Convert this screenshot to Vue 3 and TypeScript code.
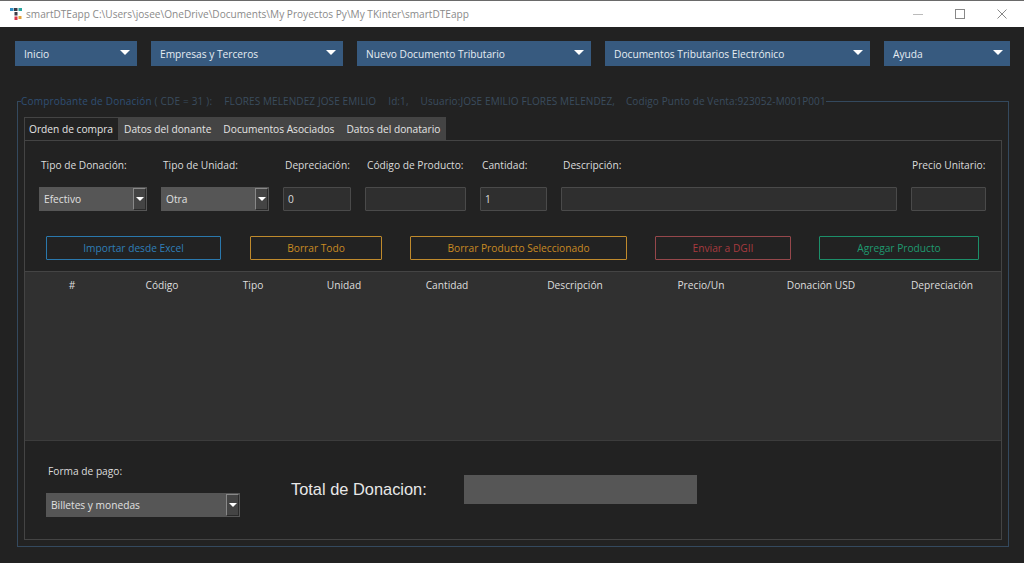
<script setup lang="ts">
const menus = [
  { label: 'Inicio', width: 122 },
  { label: 'Empresas y Terceros', width: 192 },
  { label: 'Nuevo Documento Tributario', width: 234 },
  { label: 'Documentos Tributarios Electrónico', width: 265 },
  { label: 'Ayuda', width: 126 },
]
const tabs = ['Datos del donante', 'Documentos Asociados', 'Datos del donatario']
const buttons = [
  { label: 'Importar desde Excel', cls: 'blue' },
  { label: 'Borrar Todo', cls: 'orange' },
  { label: 'Borrar Producto Seleccionado', cls: 'orange' },
  { label: 'Enviar a DGII', cls: 'red' },
  { label: 'Agregar Producto', cls: 'green' },
]
const columns = ['#', 'Código', 'Tipo', 'Unidad', 'Cantidad', 'Descripción', 'Precio/Un', 'Donación USD', 'Depreciación']
</script>

<template>
  <div class="window">
    <header class="titlebar">
      <svg class="logo" width="14" height="14" viewBox="0 0 14 14">
        <rect x="1" y="1" width="3.5" height="3" fill="#2f8fc4" />
        <rect x="5" y="1" width="3.5" height="3" fill="#3a3a46" />
        <rect x="9.5" y="1" width="3.5" height="3" fill="#2aa6a0" />
        <rect x="5.5" y="5" width="3" height="3.5" fill="#3c3c48" />
        <rect x="5.5" y="9.5" width="3" height="3.5" fill="#d8344a" />
        <rect x="9.5" y="9" width="3" height="3" fill="#e2a23a" />
      </svg>
      <span class="title">smartDTEapp C:\Users\josee\OneDrive\Documents\My Proyectos Py\My TKinter\smartDTEapp</span>
      <div class="controls">
        <svg width="12" height="12" viewBox="0 0 12 12"><path d="M1 6.5h10" stroke="#bbb" fill="none" /></svg>
        <svg width="12" height="12" viewBox="0 0 12 12"><rect x="1.5" y="1.5" width="9" height="9" stroke="#888" fill="none" /></svg>
        <svg width="12" height="12" viewBox="0 0 12 12"><path d="M1.5 1.5l9 9M10.5 1.5l-9 9" stroke="#888" fill="none" /></svg>
      </div>
    </header>

    <main class="content">
      <nav class="menubar">
        <div v-for="m in menus" :key="m.label" class="menu" :style="{ width: m.width + 'px' }">
          <span>{{ m.label }}</span>
          <i class="arrow" />
        </div>
      </nav>

      <fieldset class="group">
        <legend><span class="lead">Comprobante de Donación</span> ( CDE = 31 ):<span class="sp">FLORES MELENDEZ JOSE EMILIO</span><span class="sp">Id:1,</span><span class="sp">Usuario:JOSE EMILIO FLORES MELENDEZ,</span><span class="sp last">Codigo Punto de Venta:923052-M001P001</span></legend>

        <div class="tabs">
          <div class="tab active">Orden de compra</div>
          <div v-for="t in tabs" :key="t" class="tab">{{ t }}</div>
        </div>

        <section class="panel">
          <div class="fields">
            <label>Tipo de Donación:</label>
            <label>Tipo de Unidad:</label>
            <label>Depreciación:</label>
            <label>Código de Producto:</label>
            <label>Cantidad:</label>
            <label>Descripción:</label>
            <label class="right">Precio Unitario:</label>
            <div class="combo"><span>Efectivo</span><b class="drop"><i class="arrow small" /></b></div>
            <div class="combo"><span>Otra</span><b class="drop"><i class="arrow small" /></b></div>
            <div class="entry">0</div>
            <div class="entry" />
            <div class="entry">1</div>
            <div class="entry" />
            <div class="entry" />
          </div>

          <div class="actions">
            <button v-for="b in buttons" :key="b.label" :class="['action', b.cls]">{{ b.label }}</button>
          </div>

          <div class="table">
            <div class="thead">
              <span v-for="c in columns" :key="c">{{ c }}</span>
            </div>
          </div>

          <div class="bottom">
            <div class="pay">
              <label>Forma de pago:</label>
              <div class="combo wide"><span>Billetes y monedas</span><b class="drop"><i class="arrow small" /></b></div>
            </div>
            <div class="total-label">Total de Donacion:</div>
            <div class="total-box" />
          </div>
        </section>
      </fieldset>
    </main>
  </div>
</template>

<style scoped>
.window {
  width: 1024px;
  height: 563px;
  background: #222222;
  font-family: "Open Sans", "Noto Sans", sans-serif;
  font-size: 10.2px;
  color: #dcdcdc;
  display: flex;
  flex-direction: column;
  overflow: hidden;
}
.titlebar {
  height: 27px;
  box-sizing: border-box;
  background: #fff;
  border-top: 1px solid #6a6a6a;
  display: flex;
  align-items: center;
  padding-left: 9px;
  flex: none;
}
.logo { flex: none; }
.title {
  margin-left: 3px;
  color: #8a8a8a;
  font-size: 10.1px;
  white-space: nowrap;
}
.controls {
  margin-left: auto;
  display: flex;
  gap: 30px;
  padding-right: 16px;
}
.content {
  padding: 14px 14px 0 15px;
  flex: 1;
  min-height: 0;
}
.menubar {
  display: flex;
  gap: 14px;
}
.menu {
  height: 25px;
  background: #375a7f;
  color: #e6edf3;
  box-sizing: border-box;
  padding: 0 9px;
  display: flex;
  align-items: center;
  justify-content: space-between;
}
.arrow {
  width: 0;
  height: 0;
  border-left: 5px solid transparent;
  border-right: 5px solid transparent;
  border-top: 5px solid #fff;
}
.menu .arrow { margin-right: -2px; margin-top: -3px; }
.arrow.small {
  border-left-width: 4px;
  border-right-width: 4px;
  border-top-width: 4px;
}
.group {
  margin: 28px 0 0 2px;
  padding: 0 6px 6px 6px;
  width: 992px;
  height: 453px;
  box-sizing: border-box;
  border: 1px solid #34495e;
  min-width: 0;
}
legend {
  padding: 0;
  margin-left: -3px;
  color: #3a4c5e;
  font-size: 10px;
  line-height: 14px;
  white-space: nowrap;
  letter-spacing: 0.02em;
}
.lead { color: #2f4f74; }
.sp { margin-left: 12px; letter-spacing: 0.01em; }
.sp.last { margin-left: 11px; }
.tabs {
  display: flex;
  height: 23px;
  margin-top: 9px;
}
.tab {
  background: #444;
  color: #e4e4e4;
  padding: 0 6px;
  display: flex;
  align-items: center;
  white-space: nowrap;
}
.tab.active {
  background: #222;
  width: 94px;
  box-sizing: border-box;
  padding: 0 4px;
  border-left: 1px solid #444;
  border-top: 1px solid #444;
}
.panel {
  width: 978px;
  height: 400px;
  box-sizing: border-box;
  border: 1px solid #444;
  display: flex;
  flex-direction: column;
}
.fields {
  display: grid;
  grid-template-columns: 108px 108px 68px 101px 67px 336px 75px;
  column-gap: 14px;
  grid-template-rows: 14px 24px;
  row-gap: 15px;
  margin: 17px 0 0 14px;
  align-items: center;
}
.fields label { padding-left: 2px; white-space: nowrap; }
.fields label.right { padding-left: 1px; }
.combo {
  height: 24px;
  background: #565656;
  display: flex;
  align-items: center;
  justify-content: space-between;
  padding-left: 5px;
  color: #e0e0e0;
  box-sizing: border-box;
}
.drop {
  width: 13px;
  height: 22px;
  margin-right: 1px;
  box-sizing: border-box;
  border: 1px solid #888;
  border-right-color: #2a2a2a;
  border-bottom-color: #2a2a2a;
  background: #444;
  display: flex;
  align-items: center;
  justify-content: center;
}
.entry {
  height: 24px;
  box-sizing: border-box;
  background: #2f2f2f;
  border: 1px solid #4a4a4a;
  border-radius: 1px;
  padding-left: 4px;
  line-height: 22px;
  color: #dcdcdc;
}
.actions {
  display: flex;
  gap: 28px;
  margin: 25px 0 0 21px;
}
.action {
  height: 24px;
  background: transparent;
  border: 1px solid;
  border-radius: 1px;
  font: inherit;
  padding: 0;
}
.action:nth-child(1) { width: 175px; }
.action:nth-child(2) { width: 132px; margin-left: 1px; }
.action:nth-child(3) { width: 217px; }
.action:nth-child(4) { width: 136px; }
.action:nth-child(5) { width: 160px; }
.blue { color: #2f7fb8; border-color: #2a78ad; }
.orange { color: #c98a22; border-color: #c08a2c; }
.red { color: #a83a3f; border-color: #96474b; }
.green { color: #1f9a70; border-color: #1c8f6a; }
.table {
  margin-top: 11px;
  height: 170px;
  background: #303030;
  border-top: 1px solid #444;
  border-bottom: 1px solid #3c3c3c;
  box-sizing: border-box;
}
.thead {
  display: grid;
  grid-template-columns: 94px 86px 96px 86px 120px 136px 116px 124px 118px;
  height: 26px;
  align-items: center;
  text-align: center;
  color: #dedede;
}
.bottom {
  display: flex;
  align-items: flex-start;
  padding: 0 0 0 21px;
}
.pay {
  width: 245px;
  flex: none;
  display: flex;
  flex-direction: column;
  margin-top: 23px;
  gap: 15px;
}
.pay label { padding-left: 2px; line-height: 14px; }
.combo.wide { width: 194px; }
.total-label {
  width: 173px;
  flex: none;
  font-family: "Liberation Sans", Arial, sans-serif;
  font-size: 16.4px;
  line-height: 18px;
  color: #e8e8e8;
  margin-top: 39px;
}
.total-box {
  width: 233px;
  height: 29px;
  background: #565656;
  margin-top: 34px;
}
</style>

<style>
html, body { margin: 0; background: #222; }
</style>
